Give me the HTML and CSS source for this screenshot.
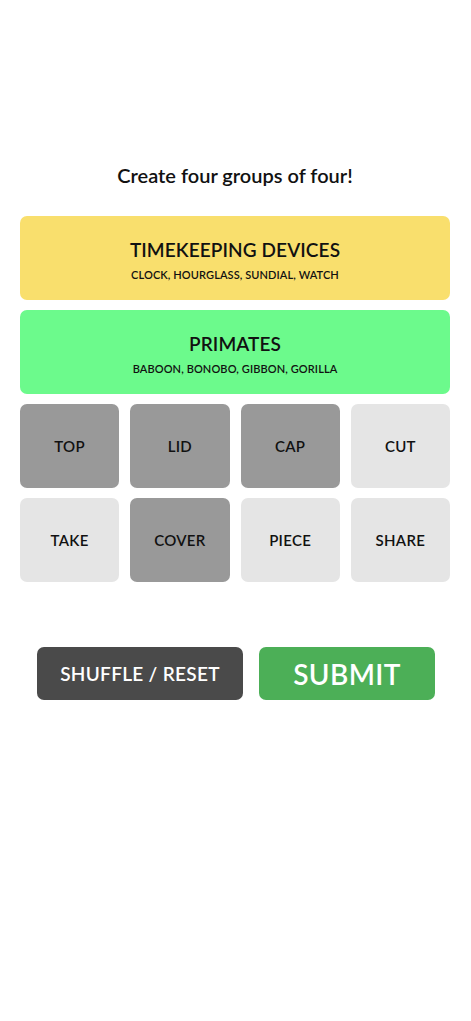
FILE: index.html
```html
<!DOCTYPE html>
<html lang="en">
<head>
<meta charset="utf-8">
<title>Connections</title>
<link rel="stylesheet" href="styles.css">
</head>
<body>
<main class="game">
  <h1 class="title">Create four groups of four!</h1>
  <section class="board">
    <div class="solved yellow">
      <div class="solved-name">TIMEKEEPING DEVICES</div>
      <div class="solved-words">CLOCK, HOURGLASS, SUNDIAL, WATCH</div>
    </div>
    <div class="solved green">
      <div class="solved-name">PRIMATES</div>
      <div class="solved-words">BABOON, BONOBO, GIBBON, GORILLA</div>
    </div>
    <div class="grid">
      <div class="tile selected">TOP</div>
      <div class="tile selected">LID</div>
      <div class="tile selected">CAP</div>
      <div class="tile">CUT</div>
      <div class="tile">TAKE</div>
      <div class="tile selected">COVER</div>
      <div class="tile">PIECE</div>
      <div class="tile">SHARE</div>
    </div>
  </section>
  <div class="actions">
    <button class="btn shuffle">SHUFFLE / RESET</button>
    <button class="btn submit">SUBMIT</button>
  </div>
</main>
</body>
</html>
```

FILE: styles.css
```css
html, body {
  margin: 0;
  padding: 0;
  background: #ffffff;
}
body {
  font-family: "Lato", "Open Sans", "Liberation Sans", sans-serif;
  color: #111111;
}
.game {
  padding: 160px 21px 0 20px;
}
.title {
  margin: 0;
  text-align: center;
  font-size: 20px;
  font-weight: 600;
  line-height: 30px;
  color: #111;
}
.board {
  margin-top: 26px;
  display: flex;
  flex-direction: column;
  gap: 10px;
}
.solved {
  height: 84px;
  border-radius: 7px;
  display: flex;
  flex-direction: column;
  align-items: center;
  justify-content: center;
  gap: 7px;
  padding-top: 3px;
  box-sizing: border-box;
}
.yellow { background: #f9df6d; }
.green { background: #6cfa8c; }
.solved-name {
  font-size: 19px;
  font-weight: 600;
  letter-spacing: 0.1px;
}
.solved-words {
  font-size: 11px;
  font-weight: 600;
  letter-spacing: 0.1px;
}
.grid {
  display: grid;
  grid-template-columns: repeat(4, 1fr);
  gap: 10px 11px;
}
.tile {
  height: 84px;
  border-radius: 7px;
  background: #e5e5e5;
  display: flex;
  align-items: center;
  justify-content: center;
  font-size: 15px;
  font-weight: 600;
  letter-spacing: 0.3px;
}
.tile.selected { background: #999999; }
.actions {
  margin-top: 65px;
  padding-left: 2px;
  display: flex;
  justify-content: center;
  gap: 16px;
}
.btn {
  border: none;
  height: 53px;
  border-radius: 7px;
  color: #ffffff;
  font-family: inherit;
  font-weight: 600;
  padding: 0;
}
.shuffle {
  width: 206px;
  background: #4a4a4a;
  font-size: 19px;
  letter-spacing: 0.3px;
}
.submit {
  width: 176px;
  background: #4caf57;
  font-size: 28px;
  letter-spacing: 0.4px;
}
```
